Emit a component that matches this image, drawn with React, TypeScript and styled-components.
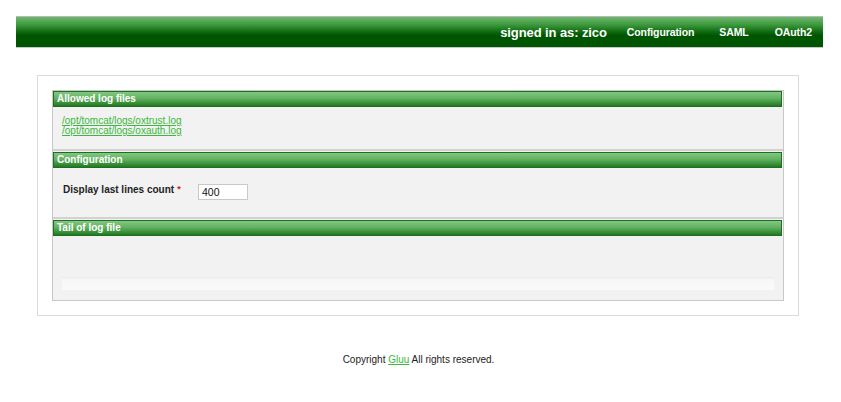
import React from "react";
import styled, { createGlobalStyle } from "styled-components";

const Global = createGlobalStyle`
  html, body { margin: 0; padding: 0; background: #fff; }
  body { font-family: "Liberation Sans", Arial, Helvetica, sans-serif; color: #222; }
`;

const Page = styled.div`
  width: 841px;
  padding-top: 16px;
`;

const Header = styled.div`
  margin-left: 16px;
  width: 807px;
  height: 32px;
  border-top: 1px solid #b8b8b8;
  border-bottom: 1px solid #c8c8c8;
  background: linear-gradient(to bottom, #6fb86f 0%, #3f9a3f 25%, #0e6a0e 50%, #005500 62%, #005500 100%);
  display: flex;
  align-items: center;
  justify-content: flex-end;
  box-sizing: border-box;
  padding-right: 11px;
`;

const NavItem = styled.a<{ $big?: boolean; $gap: number }>`
  color: #fff;
  font-weight: bold;
  font-size: ${(p) => (p.$big ? "13px" : "10.5px")};
  text-decoration: none;
  margin-left: ${(p) => p.$gap}px;
  letter-spacing: -0.1px;
`;

const Outer = styled.div`
  margin: 27px 0 0 37px;
  width: 762px;
  box-sizing: border-box;
  border: 1px solid #dadada;
  padding: 14px;
`;

const Panel = styled.div`
  border: 1px solid #c8c8c8;
  background: #f2f2f2;
  display: flex;
  flex-direction: column;
`;

const Section = styled.div<{ $first?: boolean }>`
  border-top: ${(p) => (p.$first ? "none" : "2px solid #d2d2d2")};
  padding-top: ${(p) => (p.$first ? "0" : "1px")};
`;

const Bar = styled.div`
  height: 16px;
  margin-right: 1px;
  box-sizing: border-box;
  border: 1px solid #1f6e1f;
  background: linear-gradient(to bottom, #82c882 0%, #62b262 45%, #3d943d 75%, #237923 100%);
  color: #fff;
  font-size: 10px;
  font-weight: bold;
  line-height: 14px;
  padding-left: 3px;
`;

const Body = styled.div<{ $h: number }>`
  height: ${(p) => p.$h}px;
  box-sizing: border-box;
`;

const LinkList = styled.div`
  padding: 9px 0 0 9px;
  display: flex;
  flex-direction: column;
`;

const FileLink = styled.a`
  color: #3cb83c;
  font-size: 10px;
  line-height: 10px;
  text-decoration: underline;
`;

const FormRow = styled.div`
  display: flex;
  align-items: center;
  padding: 16px 0 0 10px;
`;

const Label = styled.label`
  font-size: 10px;
  font-weight: bold;
  color: #222;
  width: 135px;
  margin-top: -5px;
`;

const Req = styled.span`
  color: #e01010;
  font-size: 9px;
  margin-left: 3px;
  vertical-align: top;
`;

const Input = styled.input`
  width: 50px;
  height: 16px;
  box-sizing: border-box;
  border: 1px solid #c9c9c9;
  background: #fff;
  font-family: "Liberation Sans", Arial, sans-serif;
  font-size: 10.5px;
  padding: 0 3px;
  color: #111;
`;

const LogArea = styled.div`
  padding: 41px 9px 0 9px;
`;

const Scroll = styled.div`
  height: 13px;
  background: linear-gradient(to bottom, #ebebeb 0%, #f7f7f7 20%, #fafafa 100%);
`;

const Footer = styled.div`
  margin-top: 38px;
  text-align: center;
  font-size: 10px;
  color: #222;
  padding-right: 4px;
`;

const FooterLink = styled.a`
  color: #3cb83c;
  text-decoration: underline;
`;

export default function App() {
  return (
    <Page>
      <Global />
      <Header>
        <NavItem $big $gap={0}>signed in as: zico</NavItem>
        <NavItem $gap={20}>Configuration</NavItem>
        <NavItem $gap={25}>SAML</NavItem>
        <NavItem $gap={26}>OAuth2</NavItem>
      </Header>
      <Outer>
        <Panel>
          <Section $first>
            <Bar>Allowed log files</Bar>
            <Body $h={42}>
              <LinkList>
                <FileLink href="#">/opt/tomcat/logs/oxtrust.log</FileLink>
                <FileLink href="#">/opt/tomcat/logs/oxauth.log</FileLink>
              </LinkList>
            </Body>
          </Section>
          <Section>
            <Bar>Configuration</Bar>
            <Body $h={49}>
              <FormRow>
                <Label>
                  Display last lines count<Req>*</Req>
                </Label>
                <Input defaultValue="400" />
              </FormRow>
            </Body>
          </Section>
          <Section>
            <Bar>Tail of log file</Bar>
            <Body $h={64}>
              <LogArea>
                <Scroll />
              </LogArea>
            </Body>
          </Section>
        </Panel>
      </Outer>
      <Footer>
        Copyright <FooterLink href="#">Gluu</FooterLink> All rights reserved.
      </Footer>
    </Page>
  );
}
